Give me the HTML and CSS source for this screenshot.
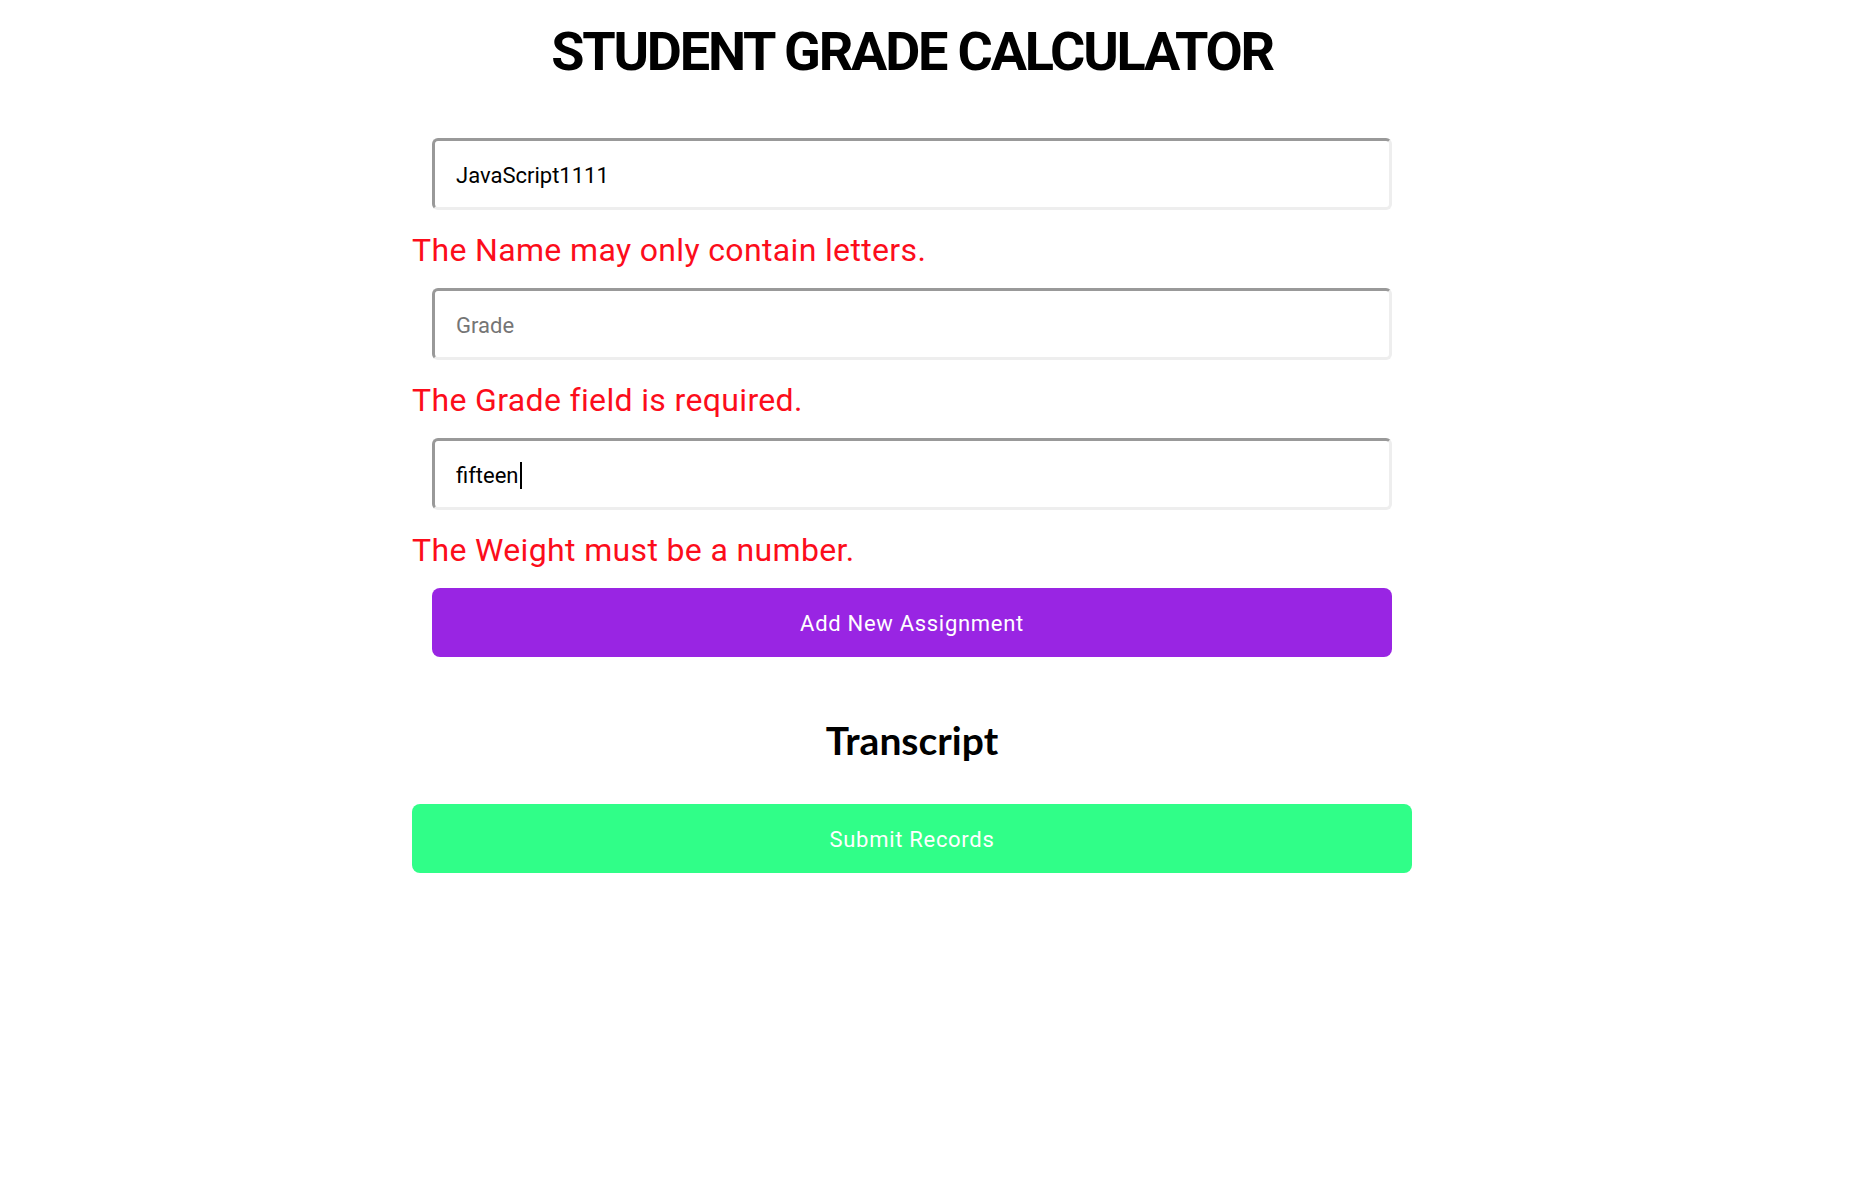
FILE: index.html
```html
<!DOCTYPE html>
<html lang="en">
<head>
<meta charset="utf-8">
<title>Student Grade Calculator</title>
<link rel="stylesheet" href="styles.css">
</head>
<body>
<main class="page">
  <h1 class="title">STUDENT GRADE CALCULATOR</h1>
  <form class="form">
    <div class="field"><span class="value">JavaScript1111</span></div>
    <p class="error">The Name may only contain letters.</p>
    <div class="field"><span class="placeholder">Grade</span></div>
    <p class="error">The Grade field is required.</p>
    <div class="field"><span class="value">fifteen</span><span class="caret"></span></div>
    <p class="error">The Weight must be a number.</p>
    <button type="button" class="btn btn-add">Add New Assignment</button>
  </form>
  <h2 class="subtitle">Transcript</h2>
  <button type="button" class="btn btn-submit">Submit Records</button>
</main>
</body>
</html>
```

FILE: styles.css
```css
html, body {
  margin: 0;
  background: #ffffff;
}
body {
  padding-right: 26px;
  font-family: Roboto, "Liberation Sans", sans-serif;
  color: #000;
}
.page {
  width: 1000px;
  margin: 0 auto;
  display: flex;
  flex-direction: column;
}
.title {
  margin: 20px 0 0;
  font-family: Roboto, "Liberation Sans", sans-serif;
  font-weight: 700;
  font-size: 54px;
  letter-spacing: -2.2px;
  text-align: center;
  line-height: normal;
}
.form {
  margin-top: 55px;
  display: flex;
  flex-direction: column;
}
.field {
  margin: 0 20px;
  height: 72px;
  box-sizing: border-box;
  border: 3px solid #eeeeee;
  border-top-color: #999999;
  border-left-color: #999999;
  border-radius: 6px;
  padding: 3px 21px 0;
  display: flex;
  align-items: center;
  font-size: 22px;
}
.value { color: #000; }
.placeholder { color: #757575; }
.caret {
  display: inline-block;
  width: 2px;
  height: 27px;
  background: #000;
  margin-left: 1px;
}
.error {
  margin: 21px 0 19px;
  color: #fc0d1b;
  font-size: 32px;
  letter-spacing: 0.35px;
  line-height: normal;
}
.btn {
  border: none;
  color: #fff;
  font-family: Roboto, "Liberation Sans", sans-serif;
  font-size: 22px;
  height: 69px;
  padding-top: 2px;
  border-radius: 8px;
  cursor: pointer;
  letter-spacing: 0.7px;
}
.btn-add {
  margin: 0 20px;
  background: #9925e3;
}
.subtitle {
  margin: 60px 0 0;
  text-align: center;
  font-family: Lato, "Open Sans", sans-serif;
  font-weight: 700;
  font-size: 39px;
  line-height: normal;
}
.btn-submit {
  margin-top: 41px;
  background: #30fe88;
}
```
